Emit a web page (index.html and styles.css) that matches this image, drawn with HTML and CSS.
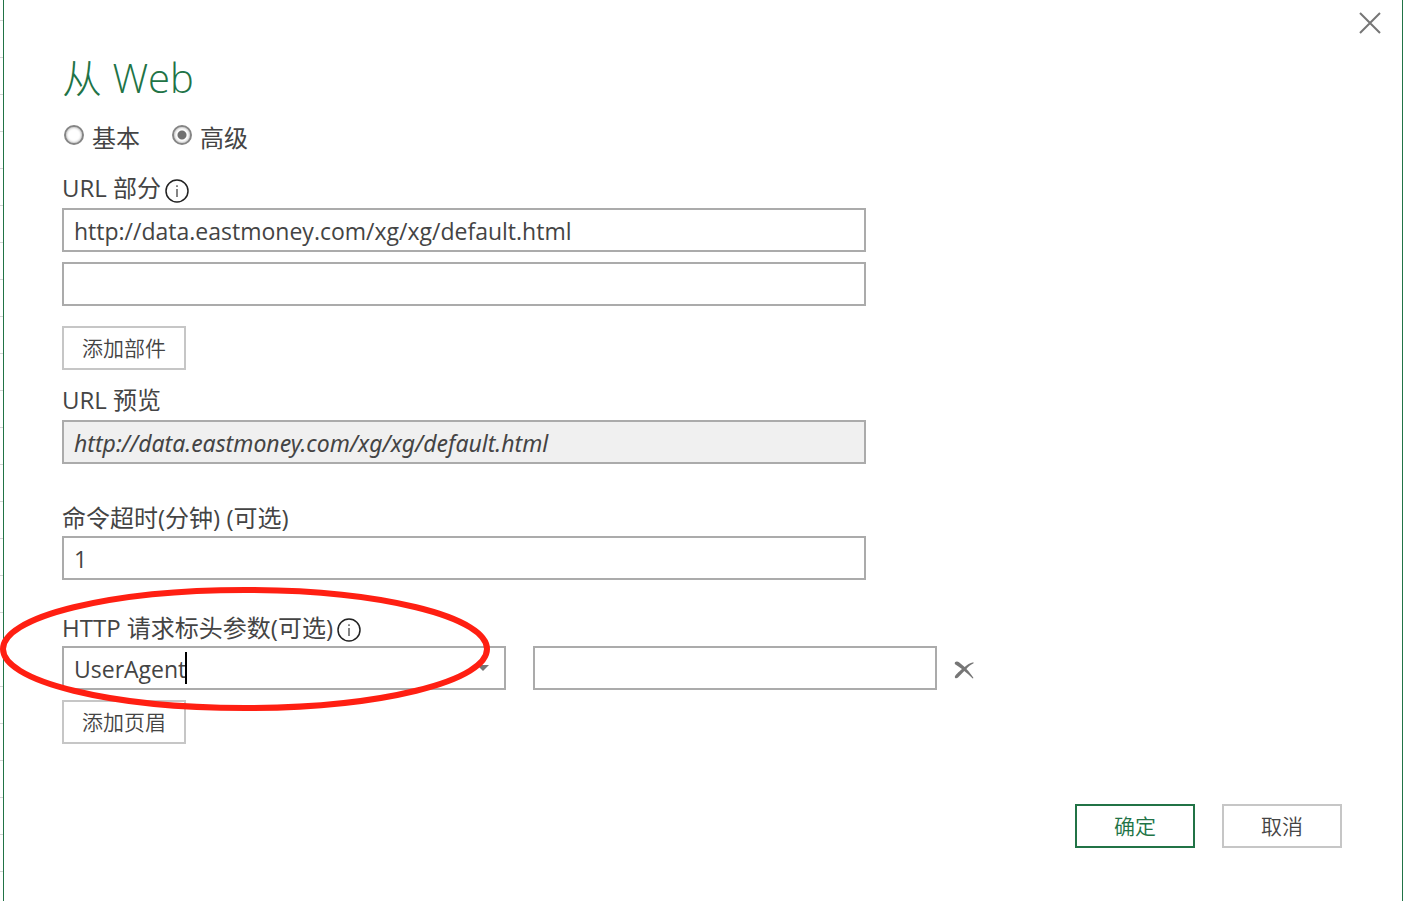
FILE: index.html
```html
<!DOCTYPE html>
<html lang="zh-CN">
<head>
<meta charset="utf-8">
<meta name="viewport" content="width=device-width, initial-scale=1">
<title>从 Web</title>
<link rel="stylesheet" href="styles.css">
</head>
<body>
<div class="sheet-edge"></div>
<form class="dialog" onsubmit="return false">
  <button class="close" type="button" aria-label="关闭">
    <svg width="24" height="24" viewBox="0 0 24 24"><path d="M2 2 22 22M22 2 2 22" fill="none" stroke="#767676" stroke-width="2"/></svg>
  </button>
  <h1 class="title">从 Web</h1>
  <div class="modes">
    <label class="mode"><input class="radio" type="radio" name="mode"><span>基本</span></label>
    <label class="mode"><input class="radio" type="radio" name="mode" checked><span>高级</span></label>
  </div>

  <section class="group parts">
    <div class="caption">
      <label for="part1">URL 部分</label>
      <svg class="info" viewBox="0 0 24 24" aria-hidden="true"><circle cx="12" cy="12" r="11" fill="none" stroke="#222" stroke-width="1.5"/><path d="M12 10v8M12 6.3v1.7" stroke="#444" stroke-width="1.3"/></svg>
    </div>
    <input class="box" id="part1" type="text" value="http://data.eastmoney.com/xg/xg/default.html">
    <input class="box second" type="text" aria-label="URL 部分 2">
    <button class="button add-part" type="button">添加部件</button>
  </section>

  <section class="group preview">
    <div class="caption"><label for="preview">URL 预览</label></div>
    <input class="box readonly" id="preview" type="text" readonly value="http://data.eastmoney.com/xg/xg/default.html">
  </section>

  <section class="group timeout">
    <div class="caption low"><label for="timeout">命令超时(分钟) (可选)</label></div>
    <input class="box" id="timeout" type="text" value="1">
  </section>

  <section class="group headers">
    <div class="caption low">
      <label for="header">HTTP 请求标头参数(可选)</label>
      <svg class="info" viewBox="0 0 24 24" aria-hidden="true"><circle cx="12" cy="12" r="11" fill="none" stroke="#222" stroke-width="1.5"/><path d="M12 10v8M12 6.3v1.7" stroke="#444" stroke-width="1.3"/></svg>
    </div>
    <div class="header-row">
      <div class="box combo">
        <input class="combo-input" id="header" type="text" value="UserAgent">
        <span class="caret"></span>
        <svg class="arrow" width="12" height="6" viewBox="0 0 12 6" aria-hidden="true"><path d="M0 0h12L6 6z" fill="#767676"/></svg>
      </div>
      <input class="box header-value" type="text" aria-label="标头值">
      <button class="remove" type="button" aria-label="删除">
        <svg width="20" height="18" viewBox="0 0 20 18"><path d="M1 1.200C2 0 4 .3 5 1.200L10.700 6C13 3.800 16 2 19.400 1.200L19.600 2.200C16.500 3.800 14.300 5.600 12.400 7.900C15 10.500 17.700 14 19.500 17L18.700 17.500C16 15 13 12 10.300 10L4 16.500C2.800 17.600.9 17.500.8 16C.6 14.400 5 10.500 8 7.900L1.500 3.600C.7 3 .5 2 1 1.200Z" fill="#767676"/></svg>
      </button>
    </div>
    <button class="button add-header" type="button">添加页眉</button>
    <svg class="highlight" width="490" height="124" viewBox="0 0 490 124" aria-hidden="true"><ellipse cx="245" cy="62" rx="242" ry="59" fill="none" stroke="#ff1f12" stroke-width="6"/></svg>
  </section>

  <footer class="actions">
    <button class="button action primary" type="submit">确定</button>
    <button class="button action" type="button">取消</button>
  </footer>
</form>
</body>
</html>
```
FILE: styles.css
```css
* {
  box-sizing: border-box;
}

body {
  margin: 0;
  min-height: 100vh;
  display: flex;
  background: #fff;
  color: #444;
  font-family: "Open Sans", "Noto Sans CJK SC", sans-serif;
  font-size: 24px;
}

input,
button {
  font-family: inherit;
  color: inherit;
}

.sheet-edge {
  width: 3px;
  background: repeating-linear-gradient(#fff 0 20px, #d4d4d4 20px 21px, #fff 21px 37px);
}

.dialog {
  position: relative;
  flex: 1;
  padding: 52px 60px 53px 58px;
  border: solid #217346;
  border-width: 0 1px;
}

.close,
.remove {
  display: flex;
  padding: 0;
  border: 0;
  background: none;
}

.close {
  position: absolute;
  top: 11px;
  right: 20px;
}

.title {
  margin: 0;
  color: #217346;
  font-size: 40px;
  font-weight: 300;
  line-height: 52px;
}

.modes {
  display: flex;
  gap: 30px;
  margin-top: 16px;
  line-height: 36px;
}

.mode {
  display: flex;
  gap: 8px;
  padding-left: 2px;
}

.radio {
  appearance: none;
  width: 20px;
  height: 20px;
  margin: 5px 0 0;
  border: 2px solid #858585;
  border-radius: 50%;
  box-shadow: inset 0 0 2px 1px #ccc;
}

.radio:checked {
  background: radial-gradient(circle, #707070 4px, #fff 5px);
}

.group {
  display: flex;
  flex-direction: column;
  align-items: flex-start;
}

.caption {
  display: flex;
  align-items: flex-end;
  gap: 4px;
  height: 36px;
  padding-bottom: 5px;
  line-height: 30px;
}

.low {
  padding-bottom: 4px;
  line-height: 28px;
}

.info {
  width: 24px;
  height: 24px;
}

.box {
  width: 804px;
  max-width: 100%;
  height: 44px;
  padding: 2px 10px 0;
  border: 2px solid #ababab;
  border-radius: 0;
  background: #fff;
  font-size: 23px;
  outline: 0;
}

.parts {
  margin-top: 16px;
}

.second {
  margin-top: 10px;
}

.button {
  height: 44px;
  padding: 0 18px;
  border: 2px solid #c6c6c6;
  background: #fff;
  font-size: 21px;
  font-weight: 350;
  line-height: 32px;
}

.add-part {
  margin-top: 20px;
}

.preview {
  margin-top: 14px;
}

.readonly {
  background: #f0f0f0;
  font-family: "Noto Sans", "Noto Sans CJK SC", sans-serif;
  font-style: italic;
}

.timeout {
  margin-top: 36px;
}

.headers {
  position: relative;
  margin-top: 30px;
}

.header-row {
  display: flex;
  align-items: center;
}

.combo {
  display: flex;
  align-items: center;
  width: 444px;
  padding: 0 15px 0 10px;
}

.combo-input {
  width: 111px;
  height: 40px;
  padding: 2px 0 0;
  border: 0;
  background: none;
  font-size: 23px;
  outline: 0;
}

.caret {
  width: 2px;
  height: 32px;
  background: #000;
}

.arrow {
  margin-left: auto;
}

.header-value {
  width: 404px;
  margin-left: 27px;
}

.remove {
  margin-left: 17px;
  padding-top: 4px;
}

.add-header {
  margin-top: 10px;
}

.highlight {
  position: absolute;
  top: -23px;
  left: -62px;
  pointer-events: none;
}

.actions {
  display: flex;
  justify-content: flex-end;
  gap: 27px;
  margin-top: 60px;
}

.action {
  width: 120px;
}

.primary {
  border-color: #217346;
  color: #217346;
}
```
